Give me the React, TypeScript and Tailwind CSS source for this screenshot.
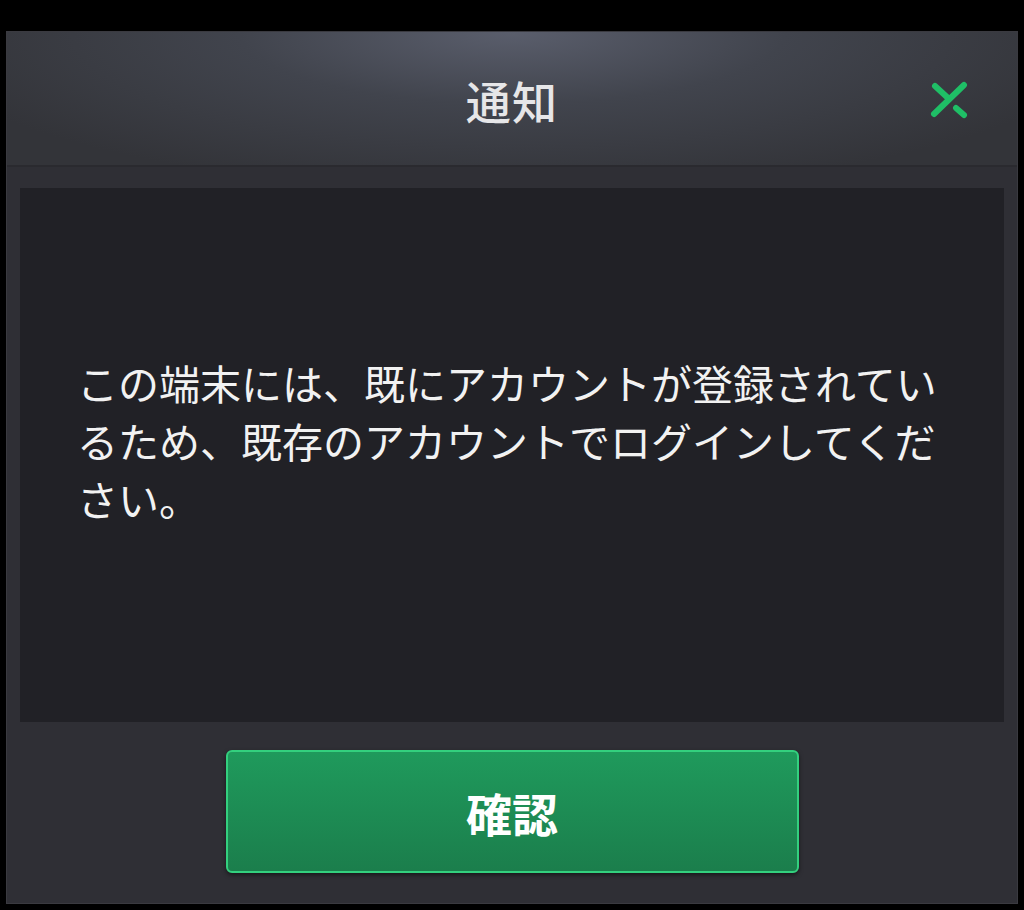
export default function App() {
  return (
    <div className="w-[1024px] h-[910px] bg-black pt-[31px] px-[6px]" style={{ fontFamily: '"Noto Sans CJK JP", "Noto Sans", sans-serif' }}>
      <div className="w-[1012px] h-[873px] flex flex-col bg-[#2f2f35] border border-[#3a3a40]">
        {/* ヘッダー */}
        <div className="relative h-[135px] shrink-0 flex items-center justify-center bg-[radial-gradient(ellipse_60%_120%_at_50%_0%,#5a5e6c_0%,#41444d_45%,#333439_100%)] border-b-2 border-[#2a2a2f]">
          <h1 className="text-[45px] font-medium text-[#e6e6e8] tracking-wide leading-none pt-[4px]">通知</h1>
          <button className="absolute right-[48px] top-[49px] w-[40px] h-[38px]" aria-label="閉じる">
            <svg viewBox="0 0 40 38" className="w-full h-full">
              <g stroke="#1fbf66" strokeWidth="6" strokeLinecap="round" fill="none">
                <path d="M35 4 L5 33" />
                <path d="M6 5 L19 17" />
                <path d="M27 27 L35 34" />
              </g>
            </svg>
          </button>
        </div>

        {/* 本文 */}
        <div className="flex-1 flex flex-col px-[13px] pt-[21px]">
          <div className="h-[534px] bg-[#212126] flex items-center pl-[57px] pr-[50px] pb-[30px]">
            <p className="text-[41px] leading-[58px] text-[#f2f2f2]">
              この端末には、既にアカウントが登録されているため、既存のアカウントでログインしてください。
            </p>
          </div>

          <div className="flex justify-center pt-[28px]">
            <button className="w-[573px] h-[123px] rounded-[6px] border-2 border-[#33d07e] bg-[linear-gradient(180deg,#1f9a5c_0%,#1b7e4c_100%)] shadow-[0_2px_4px_rgba(0,0,0,0.5)] flex items-center justify-center">
              <span className="text-[46px] font-bold text-white leading-none">確認</span>
            </button>
          </div>
        </div>
      </div>
    </div>
  );
}
